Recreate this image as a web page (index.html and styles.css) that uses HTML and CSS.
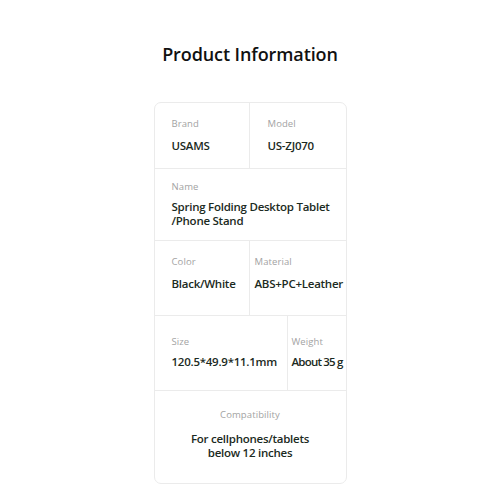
FILE: index.html
```html
<!DOCTYPE html>
<html>
<head>
<meta charset="utf-8">
<link rel="stylesheet" href="styles.css">
</head>
<body>
<div class="page">
  <h1 class="title">Product Information</h1>
  <div class="card">
    <div class="row row-1">
      <div class="cell cell-a"><div class="label">Brand</div><div class="value">USAMS</div></div>
      <div class="cell cell-b"><div class="label">Model</div><div class="value">US-ZJ070</div></div>
    </div>
    <div class="row row-2">
      <div class="cell cell-a"><div class="label">Name</div><div class="value">Spring Folding Desktop Tablet<br>/Phone Stand</div></div>
    </div>
    <div class="row row-3">
      <div class="cell cell-a"><div class="label">Color</div><div class="value">Black/White</div></div>
      <div class="cell cell-c"><div class="label">Material</div><div class="value">ABS+PC+Leather</div></div>
    </div>
    <div class="row row-4">
      <div class="cell cell-a"><div class="label">Size</div><div class="value">120.5*49.9*11.1mm</div></div>
      <div class="cell cell-d"><div class="label">Weight</div><div class="value tight">About 35 g</div></div>
    </div>
    <div class="row row-5">
      <div class="cell cell-center"><div class="label">Compatibility</div><div class="value">For cellphones/tablets<br>below 12 inches</div></div>
    </div>
  </div>
</div>
</body>
</html>
```
FILE: styles.css
```css
html, body {
  margin: 0;
  padding: 0;
  background: #ffffff;
}
body {
  font-family: "Open Sans", sans-serif;
  color: #1b2a22;
}
.page {
  display: flex;
  flex-direction: column;
  align-items: center;
  padding-top: 41px;
}
.title {
  margin: 0;
  font-size: 18px;
  font-weight: 600;
  line-height: 26px;
  color: #111;
  letter-spacing: -0.1px;
}
.card {
  margin-top: 35px;
  width: 191px;
  border: 1px solid #ebebeb;
  border-radius: 7px;
  display: flex;
  flex-direction: column;
}
.row {
  display: grid;
  border-bottom: 1px solid #ebebeb;
}
.row:last-child { border-bottom: none; }
.row-1 { grid-template-columns: 95px 1fr; height: 65px; }
.row-2 { grid-template-columns: 1fr; height: 71px; }
.row-3 { grid-template-columns: 95px 1fr; height: 74px; }
.row-4 { grid-template-columns: 133px 1fr; height: 74px; }
.row-5 { grid-template-columns: 1fr; height: 92px; }
.cell {
  display: flex;
  flex-direction: column;
  justify-content: center;
  gap: 8px;
  padding-left: 17px;
  white-space: nowrap;
}
.cell-a { border-right: 1px solid #ebebeb; }
.row-2 .cell-a, .row-5 .cell { border-right: none; }
.row-2 .cell { gap: 7px; }
.row-3 .cell { gap: 8px; padding-bottom: 8px; }
.row-4 .cell { gap: 6px; }
.cell-b { padding-left: 18px; }
.cell-c { padding-left: 5px; }
.cell-d { padding-left: 4px; }
.cell-center { padding-left: 0; padding-bottom: 5px; align-items: center; text-align: center; gap: 11px; }
.label {
  font-size: 9.5px;
  line-height: 12px;
  color: #a3a3a3;
  font-weight: 500;
  letter-spacing: 0.1px;
}
.value {
  font-size: 11.5px;
  line-height: 14px;
  font-weight: 600;
  color: #1b2a22;
  letter-spacing: -0.25px;
}
.row-1 .value, .row-3 .value, .row-4 .value { line-height: 16px; }
.tight { letter-spacing: -0.8px; }
```
